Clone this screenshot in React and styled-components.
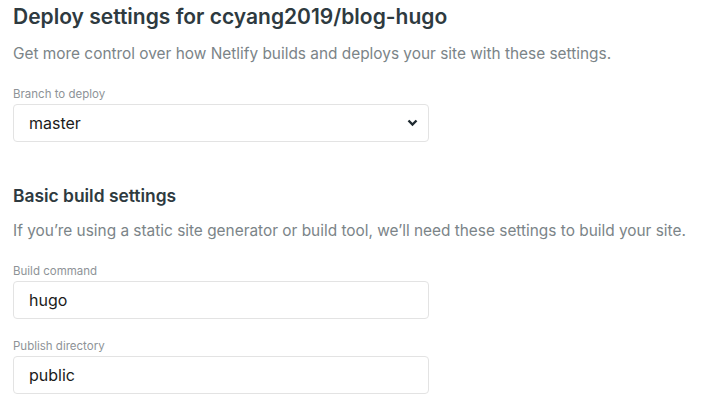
import React from "react";
import styled, { createGlobalStyle } from "styled-components";

const GlobalStyle = createGlobalStyle`
  body {
    margin: 0;
    background: #fff;
    font-family: Inter, "Liberation Sans", sans-serif;
  }
`;

function DeploySettings() {
  return (
    <Page>
      <Title>Deploy settings for ccyang2019/blog-hugo</Title>
      <Lead>Get more control over how Netlify builds and deploys your site with these settings.</Lead>

      <Field>
        <Label>Branch to deploy</Label>
        <SelectBox>
          <span>master</span>
          <svg width="11" height="8" viewBox="0 0 11 8">
            <path d="M1.5 1.5 L5.5 5.5 L9.5 1.5" fill="none" stroke="#1f2a30" strokeWidth="2.4" />
          </svg>
        </SelectBox>
      </Field>

      <SubTitle>Basic build settings</SubTitle>
      <Lead>If you’re using a static site generator or build tool, we’ll need these settings to build your site.</Lead>

      <Field>
        <Label>Build command</Label>
        <TextBox defaultValue="hugo" />
      </Field>
      <Field>
        <Label>Publish directory</Label>
        <TextBox defaultValue="public" />
      </Field>
    </Page>
  );
}

const Page = styled.div`
  padding: 3px 13px 0;
  width: 690px;
`;

const Title = styled.h1`
  margin: 0;
  font-size: 21px;
  line-height: 28px;
  font-weight: 600;
  color: #2e3a40;
`;

const SubTitle = styled.h2`
  margin: 42px 0 0;
  font-size: 17.4px;
  line-height: 24px;
  font-weight: 600;
  color: #2e3a40;
`;

const Lead = styled.p`
  margin: 12px 0 0;
  font-size: 15.4px;
  line-height: 22px;
  color: #7b8488;
`;

const Field = styled.div`
  margin-top: 21px;
  width: 416px;

  & + & {
    margin-top: 19px;
  }
`;

const Label = styled.div`
  font-size: 11.5px;
  line-height: 16px;
  color: #8e9397;
  margin-bottom: 2px;
`;

const boxStyle = `
  box-sizing: border-box;
  width: 100%;
  height: 38px;
  border: 1px solid #e3e3e3;
  border-radius: 4px;
  background: #fff;
  padding: 0 15px;
  font-family: Inter, "Liberation Sans", sans-serif;
  font-size: 16px;
  color: #1b1b1b;
`;

const SelectBox = styled.div`
  ${boxStyle}
  display: flex;
  align-items: center;
  justify-content: space-between;
  padding-right: 10px;
`;

const TextBox = styled.input`
  ${boxStyle}
  display: block;
  outline: none;
`;

export default function App() {
  return (
    <>
      <GlobalStyle />
      <DeploySettings />
    </>
  );
}
